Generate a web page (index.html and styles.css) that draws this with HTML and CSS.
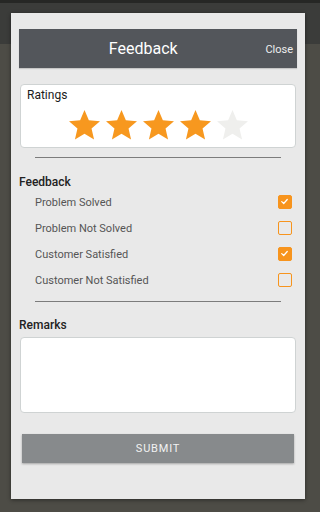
FILE: index.html
```html
<!DOCTYPE html>
<html>
<head>
<meta charset="utf-8">
<link rel="stylesheet" href="styles.css">
</head>
<body>
<div class="dialog">
  <div class="header">
    <div class="title">Feedback</div>
    <div class="close">Close</div>
  </div>
  <div class="card">
    <div class="card-label">Ratings</div>
    <div class="stars">
      <svg class="star on" viewBox="2 2 20 19"><polygon points="12,17.27 18.18,21 16.54,13.97 22,9.24 14.81,8.63 12,2 9.19,8.63 2,9.24 7.46,13.97 5.82,21"/></svg>
      <svg class="star on" viewBox="2 2 20 19"><polygon points="12,17.27 18.18,21 16.54,13.97 22,9.24 14.81,8.63 12,2 9.19,8.63 2,9.24 7.46,13.97 5.82,21"/></svg>
      <svg class="star on" viewBox="2 2 20 19"><polygon points="12,17.27 18.18,21 16.54,13.97 22,9.24 14.81,8.63 12,2 9.19,8.63 2,9.24 7.46,13.97 5.82,21"/></svg>
      <svg class="star on" viewBox="2 2 20 19"><polygon points="12,17.27 18.18,21 16.54,13.97 22,9.24 14.81,8.63 12,2 9.19,8.63 2,9.24 7.46,13.97 5.82,21"/></svg>
      <svg class="star off" viewBox="2 2 20 19"><polygon points="12,17.27 18.18,21 16.54,13.97 22,9.24 14.81,8.63 12,2 9.19,8.63 2,9.24 7.46,13.97 5.82,21"/></svg>
    </div>
  </div>
  <div class="divider first"></div>
  <div class="section-label fb">Feedback</div>
  <div class="rows">
    <div class="row"><span>Problem Solved</span><span class="cb checked"><svg viewBox="0 0 14 14"><polyline points="3.5,7.2 6,9.5 10.5,4.5"/></svg></span></div>
    <div class="row"><span>Problem Not Solved</span><span class="cb"></span></div>
    <div class="row"><span>Customer Satisfied</span><span class="cb checked"><svg viewBox="0 0 14 14"><polyline points="3.5,7.2 6,9.5 10.5,4.5"/></svg></span></div>
    <div class="row"><span>Customer Not Satisfied</span><span class="cb"></span></div>
  </div>
  <div class="divider second"></div>
  <div class="section-label rm">Remarks</div>
  <div class="remarks"></div>
  <div class="submit">SUBMIT</div>
</div>
</body>
</html>
```

FILE: styles.css
```css
html, body {
  margin: 0;
  padding: 0;
}
body {
  width: 317px;
  height: 512px;
  overflow: hidden;
  font-family: Roboto, "Noto Sans", sans-serif;
  background: linear-gradient(#262725 0, #262725 3px, #3b3c3a 3px, #3b3c3a 44px, #4d4c46 44px);
  display: flex;
  flex-direction: column;
  padding-top: 13px;
  box-sizing: border-box;
}
.dialog {
  margin-left: 11px;
  width: 294px;
  height: 486px;
  box-sizing: border-box;
  background: #e9e9e9;
  box-shadow: 0 1px 4px rgba(0,0,0,0.45);
  padding: 16px 8px 0 8px;
  display: flex;
  flex-direction: column;
}
.header {
  height: 39px;
  background: #53565b;
  display: flex;
  align-items: center;
  box-shadow: 0 1px 1px rgba(0,0,0,0.15);
}
.title {
  flex: 1;
  text-align: center;
  color: #ffffff;
  font-size: 16px;
  padding-left: 2px;
}
.close {
  color: #eeeeee;
  font-size: 11px;
  padding-right: 4px;
  padding-top: 1px;
}
.card {
  margin: 16px 1px 0 1px;
  height: 64px;
  box-sizing: border-box;
  background: #ffffff;
  border: 1px solid #cfd3d3;
  border-radius: 4px;
  padding: 3px 6px 0 6px;
  display: flex;
  flex-direction: column;
}
.card-label {
  font-size: 12px;
  line-height: 14px;
  color: #1b1b1b;
}
.stars {
  margin-top: 8px;
  display: flex;
  justify-content: center;
  gap: 6px;
}
.star {
  width: 31px;
  height: 29.5px;
}
.star.on polygon { fill: #f7981f; }
.star.off polygon { fill: #efefed; }
.divider {
  height: 1px;
  background: #7c7c7c;
  margin: 0 16px;
}
.divider.first { margin-top: 9px; }
.divider.second { margin-top: 8px; }
.section-label {
  font-size: 12px;
  line-height: 13px;
  font-weight: 500;
  color: #222222;
}
.section-label.fb { margin-top: 18px; }
.section-label.rm { margin-top: 17px; }
.rows {
  display: flex;
  flex-direction: column;
}
.row {
  height: 26px;
  display: flex;
  align-items: center;
  justify-content: space-between;
  padding-left: 16px;
  padding-right: 5px;
  font-size: 11px;
  color: #555555;
}
.row span:first-child {
  padding-top: 1px;
}
.cb {
  width: 14px;
  height: 14px;
  box-sizing: border-box;
  border: 1.5px solid #f7941d;
  border-radius: 2px;
  display: flex;
}
.cb.checked {
  background: #f7941d;
}
.cb svg {
  width: 11px;
  height: 11px;
}
.cb polyline {
  fill: none;
  stroke: #ffffff;
  stroke-width: 1.6;
  stroke-linecap: round;
  stroke-linejoin: round;
}
.remarks {
  margin: 5px 1px 0 1px;
  height: 76px;
  box-sizing: border-box;
  background: #ffffff;
  border: 1px solid #cfd3d3;
  border-radius: 4px;
}
.submit {
  margin: 21px 3px 0 3px;
  height: 29px;
  background: #878a8c;
  color: #f2f2f2;
  font-size: 11px;
  letter-spacing: 0.8px;
  display: flex;
  align-items: center;
  justify-content: center;
  box-shadow: 0 1px 2px rgba(0,0,0,0.3);
}
```
